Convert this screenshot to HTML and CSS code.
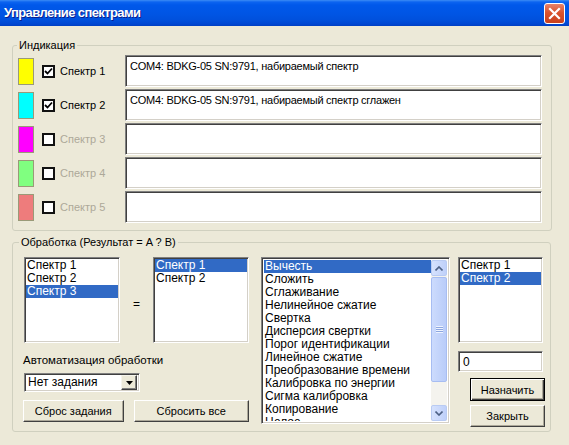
FILE: index.html
```html
<!DOCTYPE html>
<html lang="ru">
<head>
    <meta charset="UTF-8">
    <title>Управление спектрами</title>
    <link rel="stylesheet" href="styles.css">
</head>
<body>
    <div class="window">
        <div class="titlebar">
            <span class="title">Управление спектрами</span>
            <button class="close-btn" title="Закрыть">
                <svg width="13" height="13" viewBox="0 0 13 13"><path d="M2 2 L11 11 M11 2 L2 11" stroke="#fff" stroke-width="2.2" stroke-linecap="square"/></svg>
            </button>
        </div>

        <div class="client">
            <fieldset class="group group-ind">
                <legend>Индикация</legend>

                <div class="ind-row">
                    <span class="swatch sw1"></span>
                    <label class="check"><span class="box"><svg width="9" height="9" viewBox="0 0 9 9"><path d="M1 4 L3.5 6.5 L8 1.5" fill="none" stroke="#000" stroke-width="1.8"/></svg></span>Спектр 1</label>
                    <div class="field">COM4: BDKG-05 SN:9791, набираемый спектр</div>
                </div>
                <div class="ind-row">
                    <span class="swatch sw2"></span>
                    <label class="check"><span class="box"><svg width="9" height="9" viewBox="0 0 9 9"><path d="M1 4 L3.5 6.5 L8 1.5" fill="none" stroke="#000" stroke-width="1.8"/></svg></span>Спектр 2</label>
                    <div class="field">COM4: BDKG-05 SN:9791, набираемый спектр сглажен</div>
                </div>
                <div class="ind-row">
                    <span class="swatch sw3"></span>
                    <label class="check disabled"><span class="box"></span>Спектр 3</label>
                    <div class="field"></div>
                </div>
                <div class="ind-row">
                    <span class="swatch sw4"></span>
                    <label class="check disabled"><span class="box"></span>Спектр 4</label>
                    <div class="field"></div>
                </div>
                <div class="ind-row">
                    <span class="swatch sw5"></span>
                    <label class="check disabled"><span class="box"></span>Спектр 5</label>
                    <div class="field"></div>
                </div>
            </fieldset>

            <fieldset class="group group-proc">
                <legend>Обработка (Результат = A ? B)</legend>
                <div class="proc">
                    <div class="proc-left">
                        <div class="pair">
                            <div class="list list-a">
                                <div class="item">Спектр 1</div>
                                <div class="item">Спектр 2</div>
                                <div class="item selected">Спектр 3</div>
                            </div>
                            <div class="equals">=</div>
                            <div class="list list-b">
                                <div class="item selected">Спектр 1</div>
                                <div class="item">Спектр 2</div>
                            </div>
                        </div>
                        <div class="auto-label">Автоматизация обработки</div>
                        <div class="combo">
                            <span class="combo-text">Нет задания</span>
                            <span class="combo-btn"><svg width="7" height="4" viewBox="0 0 7 4"><path d="M0 0 H7 L3.5 4 Z" fill="#000"/></svg></span>
                        </div>
                        <div class="btn-row">
                            <button class="button btn-reset">Сброс задания</button>
                            <button class="button btn-reset-all">Сбросить все</button>
                        </div>
                    </div>

                    <div class="list ops">
                        <div class="ops-items">
                            <div class="item selected">Вычесть</div>
                            <div class="item">Сложить</div>
                            <div class="item">Сглаживание</div>
                            <div class="item">Нелинейное сжатие</div>
                            <div class="item">Свертка</div>
                            <div class="item">Дисперсия свертки</div>
                            <div class="item">Порог идентификации</div>
                            <div class="item">Линейное сжатие</div>
                            <div class="item">Преобразование времени</div>
                            <div class="item">Калибровка по энергии</div>
                            <div class="item">Сигма калибровка</div>
                            <div class="item">Копирование</div>
                            <div class="item">Целое</div>
                        </div>
                        <div class="scrollbar">
                            <div class="sb-btn"><svg width="8" height="5" viewBox="0 0 8 5"><path d="M0.5 4.5 L4 1 L7.5 4.5" fill="none" stroke="#4D6185" stroke-width="1.6"/></svg></div>
                            <div class="sb-track">
                                <div class="sb-thumb"><span class="grip"></span></div>
                            </div>
                            <div class="sb-btn"><svg width="8" height="5" viewBox="0 0 8 5"><path d="M0.5 0.5 L4 4 L7.5 0.5" fill="none" stroke="#4D6185" stroke-width="1.6"/></svg></div>
                        </div>
                    </div>

                    <div class="proc-right">
                        <div class="list list-c">
                            <div class="item">Спектр 1</div>
                            <div class="item selected">Спектр 2</div>
                        </div>
                        <div class="input">0</div>
                        <button class="button default">Назначить</button>
                        <button class="button">Закрыть</button>
                    </div>
                </div>
            </fieldset>
        </div>
    </div>
</body>
</html>
```

FILE: styles.css
```css
body {
    margin: 0;
    font-family: "Liberation Sans", Arial, sans-serif;
    font-size: 11px;
    line-height: 13px;
    background-color: #ECE9D8;
    color: #000;
}
.window {
    width: 569px;
    height: 445px;
    overflow: hidden;
    background-color: #ECE9D8;
}
.titlebar {
    height: 26px;
    display: flex;
    align-items: center;
    justify-content: space-between;
    padding: 0 4px;
    background: linear-gradient(to bottom, #3C8CF5 0, #0C64F0 2px, #0058EA 5px, #0055E4 14px, #0050DC 20px, #0047D2 24px, #003FC2 26px);
}
.title {
    color: #fff;
    font-size: 13px;
    font-weight: bold;
    letter-spacing: -0.6px;
    text-shadow: 1px 1px #0A1E8C;
    margin-top: -1px;
}
.close-btn {
    width: 21px;
    height: 21px;
    padding: 0;
    border: 1px solid #fff;
    border-radius: 3px;
    background: linear-gradient(to bottom, #E8826A 0, #D9532E 45%, #C9411D 100%);
    display: flex;
    align-items: center;
    justify-content: center;
    margin-top: 1px;
}
.client {
    padding: 13px 0 0 12px;
}
.group {
    margin: 0;
    border: 1px solid #D0D0BF;
    border-radius: 3px;
    box-sizing: border-box;
}
.group legend {
    padding: 0 2px;
    margin-left: -1px;
}
.group-ind {
    width: 540px;
    padding: 3px 9px 7px 5px;
    display: flex;
    flex-direction: column;
    gap: 2px;
}
.ind-row {
    display: flex;
    align-items: center;
    height: 32px;
}
.swatch {
    width: 14px;
    height: 25px;
    border: 1px solid #9A9A78;
    margin-right: 8px;
}
.sw1 { background-color: #FFFF00; }
.sw2 { background-color: #00FFFF; }
.sw3 { background-color: #FF00FF; }
.sw4 { background-color: #80FF80; }
.sw5 { background-color: #EE7C7C; }
.check {
    width: 83px;
    display: flex;
    align-items: center;
    gap: 5px;
}
.check.disabled {
    color: #ACA899;
}
.box {
    width: 9px;
    height: 9px;
    border: 2px solid #111;
    background: #fff;
    display: flex;
}
.field {
    flex: 1;
    height: 32px;
    box-sizing: border-box;
    background: #fff;
    border: 1px solid;
    border-color: #808080 #fff #fff #808080;
    box-shadow: inset 1px 1px #404040, inset -1px -1px #D4D0C8;
    padding: 4px 4px 0 4px;
    letter-spacing: -0.25px;
}
.group-proc {
    width: 539px;
    margin-top: 5px;
    padding: 8px 4px 4px 11px;
}
.group-proc legend {
    margin-left: -5px;
}
.proc {
    display: flex;
    align-items: flex-start;
}
.proc-left {
    width: 225px;
    display: flex;
    flex-direction: column;
}
.pair {
    display: flex;
    height: 86px;
}
.list {
    background: #fff;
    box-sizing: border-box;
    border: 1px solid;
    border-color: #808080 #fff #fff #808080;
    box-shadow: inset 1px 1px #404040, inset -1px -1px #D4D0C8;
    padding: 1px;
    overflow: hidden;
}
.item {
    height: 13px;
    padding-left: 1px;
    white-space: nowrap;
}
.item.selected {
    background-color: #316AC5;
    color: #fff;
}
.list-a, .list-b {
    width: 96px;
    height: 86px;
    font-size: 12px;
}
.equals {
    width: 33px;
    display: flex;
    align-items: center;
    justify-content: center;
    padding-top: 8px;
    font-size: 12px;
}
.auto-label {
    margin-top: 11px;
    margin-left: -1px;
    font-size: 11.5px;
}
.combo {
    margin-top: 6px;
    width: 116px;
    height: 19px;
    box-sizing: border-box;
    background: #fff;
    border: 1px solid;
    border-color: #808080 #fff #fff #808080;
    box-shadow: inset 1px 1px #404040, inset -1px -1px #D4D0C8;
    display: flex;
    align-items: center;
    justify-content: space-between;
    padding: 2px 2px 2px 3px;
    font-size: 12px;
}
.combo-btn {
    width: 16px;
    height: 15px;
    box-sizing: border-box;
    background: #ECE9D8;
    border: 1px solid;
    border-color: #F5F4EC #404040 #404040 #F5F4EC;
    box-shadow: inset -1px -1px #808080;
    display: flex;
    align-items: center;
    justify-content: center;
}
.btn-row {
    display: flex;
    gap: 10px;
    margin-top: 8px;
    margin-left: -1px;
}
.button {
    font-family: inherit;
    font-size: 11px;
    height: 22px;
    padding: 0;
    background: #ECE9D8;
    color: #000;
    border: 1px solid;
    border-color: #fff #404040 #404040 #fff;
    box-shadow: inset -1px -1px #ACA899;
    box-sizing: border-box;
}
.btn-reset { width: 101px; }
.btn-reset-all { width: 116px; }
.ops {
    width: 189px;
    height: 167px;
    margin-left: 12px;
    display: flex;
    padding: 2px;
}
.ops-items {
    flex: 1;
    overflow: hidden;
}
.ops .item {
    font-size: 12px;
    padding-left: 1px;
}
.scrollbar {
    width: 16px;
    display: flex;
    flex-direction: column;
    background: #F4F3EE;
}
.sb-btn {
    height: 16px;
    box-sizing: border-box;
    border: 1px solid #B9CBF3;
    border-radius: 2px;
    background: linear-gradient(to right, #D6E2FD, #BFD0FA);
    display: flex;
    align-items: center;
    justify-content: center;
}
.sb-track {
    flex: 1;
    padding: 1px 0;
}
.sb-thumb {
    height: 105px;
    box-sizing: border-box;
    border: 1px solid #A7BDF2;
    border-radius: 2px;
    background: linear-gradient(to right, #CCDBFD, #B9CCF9);
    display: flex;
    align-items: center;
    justify-content: center;
}
.grip {
    width: 7px;
    height: 7px;
    background: repeating-linear-gradient(to bottom, #EEF3FE 0, #EEF3FE 1px, #8CA6E0 1px, #8CA6E0 2px);
}
.proc-right {
    width: 87px;
    margin-left: 8px;
    display: flex;
    flex-direction: column;
}
.list-c {
    width: 85px;
    height: 86px;
    font-size: 12px;
}
.input {
    margin-top: 8px;
    width: 85px;
    height: 21px;
    box-sizing: border-box;
    background: #fff;
    border: 1px solid;
    border-color: #808080 #fff #fff #808080;
    box-shadow: inset 1px 1px #404040, inset -1px -1px #D4D0C8;
    padding: 4px 0 0 4px;
    font-size: 12px;
}
.proc-right .button {
    width: 75px;
    margin-left: 12px;
}
.button.default {
    margin-top: 6px;
    height: 23px;
    border: 1px solid #000;
    box-shadow: inset 1px 1px #fff, inset -1px -1px #404040, inset -2px -2px #ACA899;
}
.button.default + .button {
    margin-top: 4px;
}
```
